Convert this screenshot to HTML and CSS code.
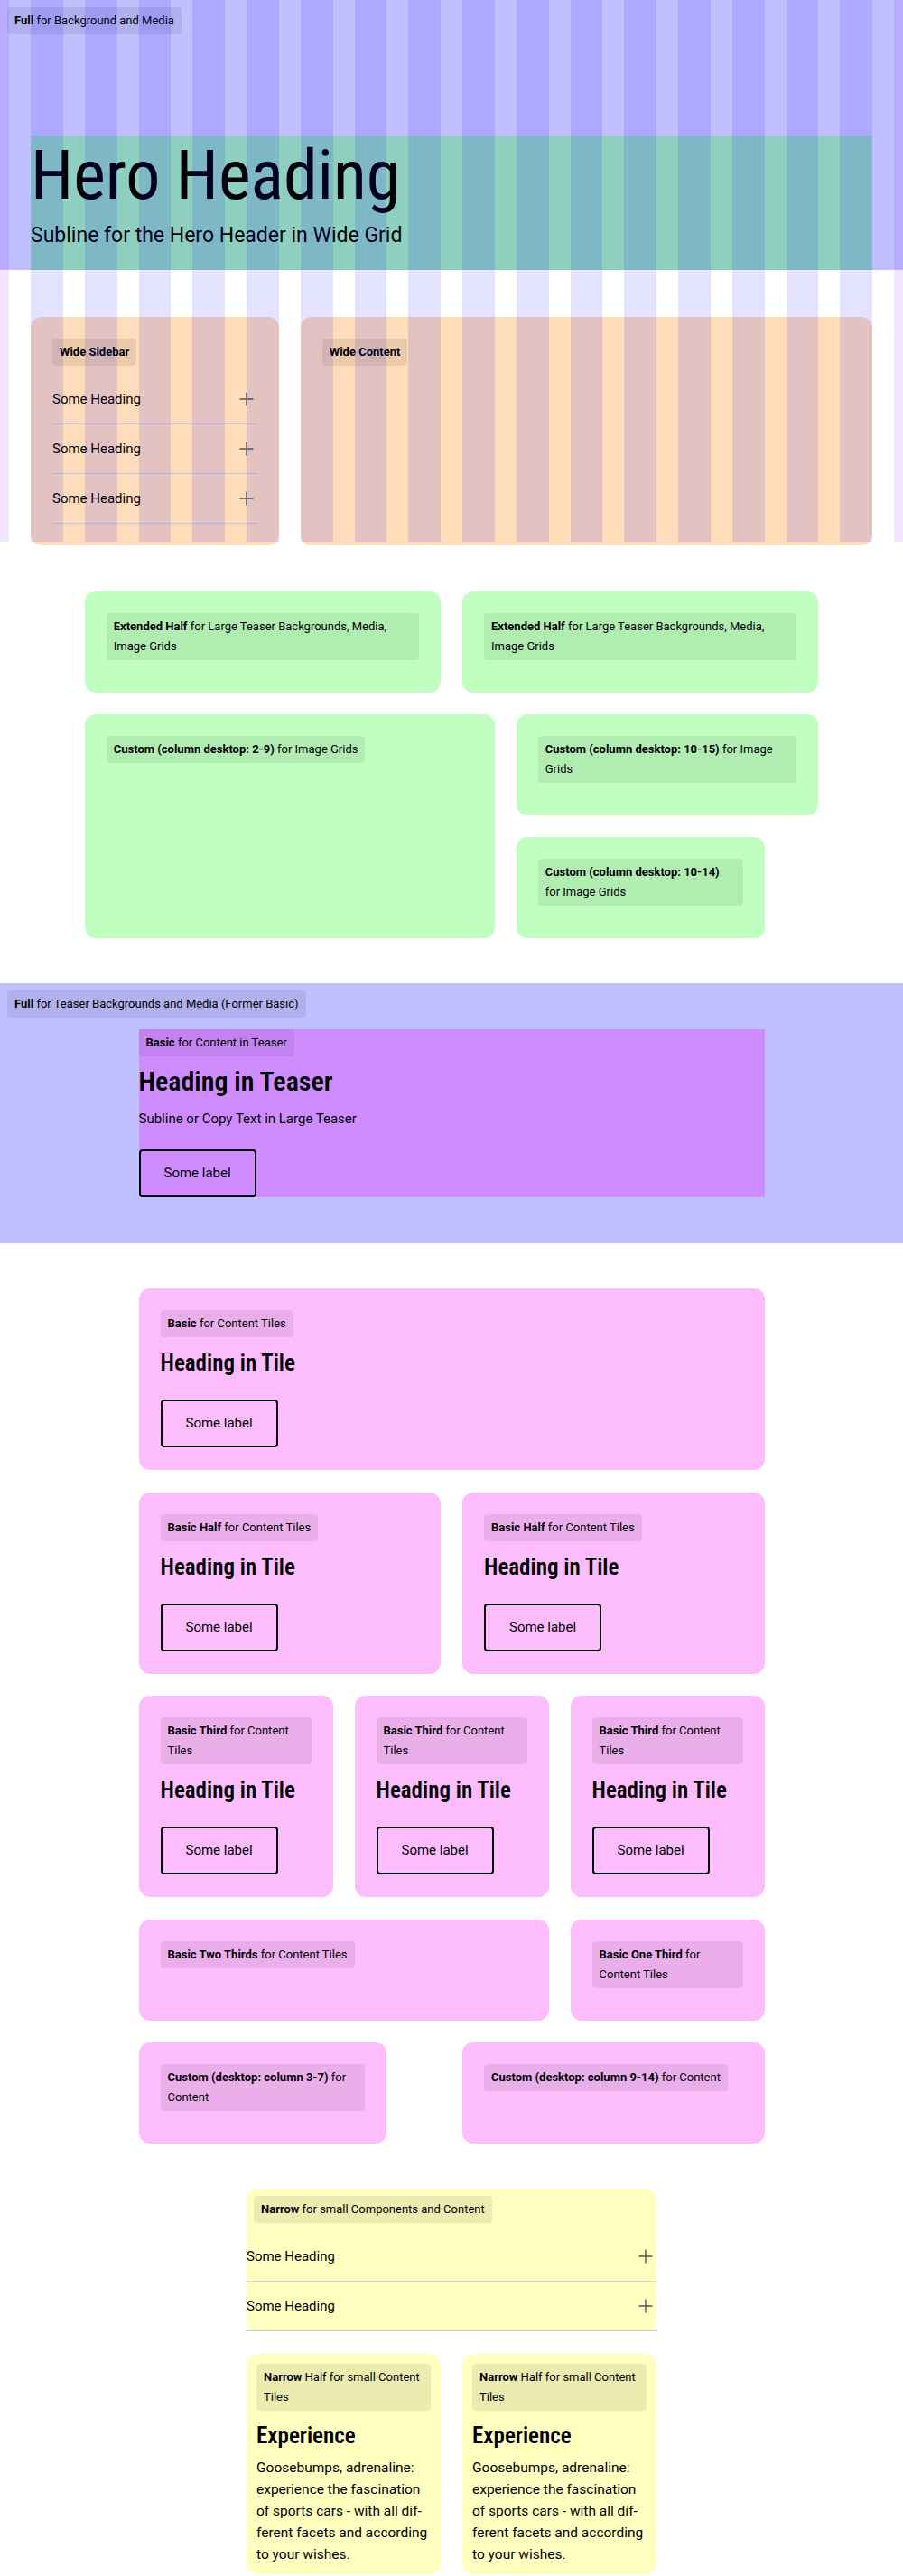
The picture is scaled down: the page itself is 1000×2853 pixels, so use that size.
FILE: index.html
```html
<!DOCTYPE html>
<html lang="en">
<head>
<meta charset="utf-8">
<title>Grid Layout Overview</title>
<link rel="stylesheet" href="styles.css">
</head>
<body>
<div class="page">
  <div class="overlay grid" aria-hidden="true">
    <span class="ov-outer"></span>
    <span class="ov-col"></span><span class="ov-col"></span><span class="ov-col"></span><span class="ov-col"></span>
    <span class="ov-col"></span><span class="ov-col"></span><span class="ov-col"></span><span class="ov-col"></span>
    <span class="ov-col"></span><span class="ov-col"></span><span class="ov-col"></span><span class="ov-col"></span>
    <span class="ov-col"></span><span class="ov-col"></span><span class="ov-col"></span><span class="ov-col"></span>
    <span class="ov-outer"></span>
  </div>

  <section class="band band-hero grid">
    <div class="label label-band"><b>Full</b> for Background and Media</div>
    <div class="hero">
      <h1 class="hero-title">Hero Heading</h1>
      <p class="hero-sub">Subline for the Hero Header in Wide Grid</p>
    </div>
  </section>

  <section class="grid sec-wide">
    <div class="card peach col-sidebar">
      <div class="label"><b>Wide Sidebar</b></div>
      <div class="accordion">
        <div class="acc-item"><span>Some Heading</span><svg class="acc-icon" viewBox="0 0 24 24"><path d="M12 4.5v15M4.5 12h15"/></svg></div>
        <div class="acc-item"><span>Some Heading</span><svg class="acc-icon" viewBox="0 0 24 24"><path d="M12 4.5v15M4.5 12h15"/></svg></div>
        <div class="acc-item"><span>Some Heading</span><svg class="acc-icon" viewBox="0 0 24 24"><path d="M12 4.5v15M4.5 12h15"/></svg></div>
      </div>
    </div>
    <div class="card peach col-wide-content">
      <div class="label"><b>Wide Content</b></div>
    </div>
  </section>

  <section class="grid sec-ext">
    <div class="card green col-ext-half-1"><div class="label"><b>Extended Half</b> for Large Teaser Backgrounds, Media, Image Grids</div></div>
    <div class="card green col-ext-half-2"><div class="label"><b>Extended Half</b> for Large Teaser Backgrounds, Media, Image Grids</div></div>
    <div class="card green col-c2-9"><div class="label"><b>Custom (column desktop: 2-9)</b> for Image Grids</div></div>
    <div class="card green col-c10-15"><div class="label"><b>Custom (column desktop: 10-15)</b> for Image Grids</div></div>
    <div class="card green col-c10-14"><div class="label"><b>Custom (column desktop: 10-14)</b> for Image Grids</div></div>
  </section>

  <section class="band band-teaser grid">
    <div class="label label-band"><b>Full</b> for Teaser Backgrounds and Media (Former Basic)</div>
    <div class="teaser">
      <div class="label"><b>Basic</b> for Content in Teaser</div>
      <h2 class="teaser-title">Heading in Teaser</h2>
      <p class="teaser-sub">Subline or Copy Text in Large Teaser</p>
      <button class="btn btn-teaser" type="button">Some label</button>
    </div>
  </section>

  <section class="grid sec-tiles">
    <div class="card pink tile col-basic">
      <div class="label"><b>Basic</b> for Content Tiles</div>
      <h3 class="tile-title">Heading in Tile</h3>
      <button class="btn" type="button">Some label</button>
    </div>
    <div class="card pink tile col-half-1">
      <div class="label"><b>Basic Half</b> for Content Tiles</div>
      <h3 class="tile-title">Heading in Tile</h3>
      <button class="btn" type="button">Some label</button>
    </div>
    <div class="card pink tile col-half-2">
      <div class="label"><b>Basic Half</b> for Content Tiles</div>
      <h3 class="tile-title">Heading in Tile</h3>
      <button class="btn" type="button">Some label</button>
    </div>
    <div class="card pink tile col-third-1">
      <div class="label"><b>Basic Third</b> for Content Tiles</div>
      <h3 class="tile-title">Heading in Tile</h3>
      <button class="btn" type="button">Some label</button>
    </div>
    <div class="card pink tile col-third-2">
      <div class="label"><b>Basic Third</b> for Content Tiles</div>
      <h3 class="tile-title">Heading in Tile</h3>
      <button class="btn" type="button">Some label</button>
    </div>
    <div class="card pink tile col-third-3">
      <div class="label"><b>Basic Third</b> for Content Tiles</div>
      <h3 class="tile-title">Heading in Tile</h3>
      <button class="btn" type="button">Some label</button>
    </div>
    <div class="card pink col-two-thirds"><div class="label"><b>Basic Two Thirds</b> for Content Tiles</div></div>
    <div class="card pink col-one-third"><div class="label"><b>Basic One Third</b> for Content Tiles</div></div>
    <div class="card pink col-c3-7"><div class="label"><b>Custom (desktop: column 3-7)</b> for Content</div></div>
    <div class="card pink col-c9-14"><div class="label"><b>Custom (desktop: column 9-14)</b> for Content</div></div>
  </section>

  <section class="grid sec-narrow">
    <div class="narrow-box">
      <div class="label"><b>Narrow</b> for small Components and Content</div>
      <div class="accordion">
        <div class="acc-item"><span>Some Heading</span><svg class="acc-icon" viewBox="0 0 24 24"><path d="M12 4.5v15M4.5 12h15"/></svg></div>
        <div class="acc-item"><span>Some Heading</span><svg class="acc-icon" viewBox="0 0 24 24"><path d="M12 4.5v15M4.5 12h15"/></svg></div>
      </div>
    </div>
  </section>

  <section class="grid sec-narrow-half">
    <div class="card yellow small-card col-nh-1">
      <div class="label"><b>Narrow</b> Half for small Content Tiles</div>
      <h3 class="tile-title">Experience</h3>
      <p class="copy">Goosebumps, adrenaline: experience the fascination of sports cars - with all dif&shy;ferent facets and according to your wishes.</p>
    </div>
    <div class="card yellow small-card col-nh-2">
      <div class="label"><b>Narrow</b> Half for small Content Tiles</div>
      <h3 class="tile-title">Experience</h3>
      <p class="copy">Goosebumps, adrenaline: experience the fascination of sports cars - with all dif&shy;ferent facets and according to your wishes.</p>
    </div>
  </section>
</div>
</body>
</html>
```

FILE: styles.css
```css
* { box-sizing: border-box; }

html, body {
  margin: 0;
  padding: 0;
}

body {
  font-family: Roboto, "Liberation Sans", Arial, sans-serif;
  color: #010205;
  background: #ffffff;
}

.page {
  position: relative;
  padding-bottom: 40px;
}

.grid {
  display: grid;
  grid-template-columns: 10px repeat(16, minmax(0, 1fr)) 10px;
  column-gap: 24px;
}

/* grid visualisation overlay */
.overlay {
  position: absolute;
  top: 0;
  left: 0;
  right: 0;
  height: 600px;
  z-index: 5;
  pointer-events: none;
}
.ov-outer { background: rgba(128, 0, 255, 0.1); }
.ov-col { background: rgba(0, 0, 255, 0.11); }

/* labels */
.label {
  width: fit-content;
  max-width: 100%;
  padding: 4px 8px;
  font-size: 13px;
  line-height: 22px;
  background: rgba(0, 0, 0, 0.075);
  border-radius: 4px;
}
.label b { font-weight: 700; }

.band { background: #c0bfff; }
.label-band {
  grid-column: 1 / -1;
  margin-left: 8px;
}

/* condensed display face */
.hero-title,
.teaser-title,
.tile-title {
  font-family: "Roboto Condensed", "Liberation Sans Narrow", Roboto, sans-serif;
  font-stretch: condensed;
}

/* hero */
.band-hero { padding-top: 8px; }
.hero {
  grid-column: 2 / 18;
  margin-top: 113px;
  background: #8ecfbf;
  padding: 4px 0 27px;
}
.hero-title {
  margin: 0;
  font-weight: 400;
  font-size: 76px;
  line-height: 78px;
}
.hero-sub {
  margin: 16px 0 0;
  font-size: 23px;
  line-height: 23px;
}

/* cards */
.card {
  border-radius: 12px;
  padding: 24px 24px 36px;
}
.peach { background: #ffdcba; padding-bottom: 24px; }
.green { background: #c0ffc0; }
.pink { background: #fdbdfd; }
.yellow { background: #ffffc0; }

/* accordion */
.accordion { margin-top: 10px; }
.acc-item {
  display: flex;
  align-items: center;
  justify-content: space-between;
  padding: 15px 0;
  border-bottom: 1px solid #c5c8e6;
  font-size: 15px;
  line-height: 24px;
}
.acc-icon {
  width: 24px;
  height: 24px;
  flex: none;
}
.acc-icon path {
  fill: none;
  stroke: #545459;
  stroke-width: 1.4;
}

/* wide */
.sec-wide { margin-top: 52px; }
.col-sidebar { grid-column: 2 / 7; }
.col-wide-content { grid-column: 7 / 18; }

/* extended */
.sec-ext { margin-top: 51px; row-gap: 24px; }
.col-ext-half-1 { grid-column: 3 / 10; grid-row: 1; }
.col-ext-half-2 { grid-column: 10 / 17; grid-row: 1; }
.col-c2-9 { grid-column: 3 / 11; grid-row: 2 / 4; }
.col-c10-15 { grid-column: 11 / 17; grid-row: 2; }
.col-c10-14 { grid-column: 11 / 16; grid-row: 3; }

/* teaser */
.band-teaser {
  margin-top: 50px;
  padding: 8px 0 51px;
}
.teaser {
  grid-column: 4 / 16;
  margin-top: 13px;
  background: #cf8cff;
}
.teaser .label { background: rgba(0, 0, 0, 0.06); }
.teaser-title {
  margin: 10px 0 0;
  font-weight: 600;
  font-size: 30px;
  line-height: 36px;
}
.teaser-sub {
  margin: 11px 0 0;
  font-size: 15px;
  line-height: 24px;
}

.btn {
  display: block;
  width: fit-content;
  margin-top: 25px;
  padding: 13px 26px;
  border: 2px solid #010205;
  border-radius: 4px;
  background: transparent;
  color: #010205;
  font-family: Roboto, "Liberation Sans", Arial, sans-serif;
  font-size: 15px;
  line-height: 23px;
}
.btn-teaser { margin-top: 22px; }

/* tiles */
.sec-tiles { margin-top: 50px; row-gap: 24.5px; }
.tile { padding-bottom: 25px; }
.tile-title {
  margin: 14px 0 0;
  font-weight: 600;
  font-size: 25px;
  line-height: 30px;
}
.col-basic { grid-column: 4 / 16; }
.col-half-1 { grid-column: 4 / 10; }
.col-half-2 { grid-column: 10 / 16; }
.col-third-1 { grid-column: 4 / 8; }
.col-third-2 { grid-column: 8 / 12; }
.col-third-3 { grid-column: 12 / 16; }
.col-two-thirds { grid-column: 4 / 12; }
.col-one-third { grid-column: 12 / 16; }
.col-c3-7 { grid-column: 4 / 9; }
.col-c9-14 { grid-column: 10 / 16; }

/* narrow */
.sec-narrow { margin-top: 50px; }
.narrow-box {
  grid-column: 6 / 14;
  background: #ffffc0;
  border-radius: 12px;
}
.narrow-box .label { margin: 8px 0 0 8px; }
.narrow-box .acc-item { border-bottom-color: #d4d4d8; }

.sec-narrow-half { margin-top: 25px; }
.col-nh-1 { grid-column: 6 / 10; }
.col-nh-2 { grid-column: 10 / 14; }
.small-card { padding: 11px 11px 10px; }
.small-card .tile-title { margin-top: 13px; }
.copy {
  margin: 8px 0 0;
  font-size: 15.5px;
  line-height: 24px;
}
```
